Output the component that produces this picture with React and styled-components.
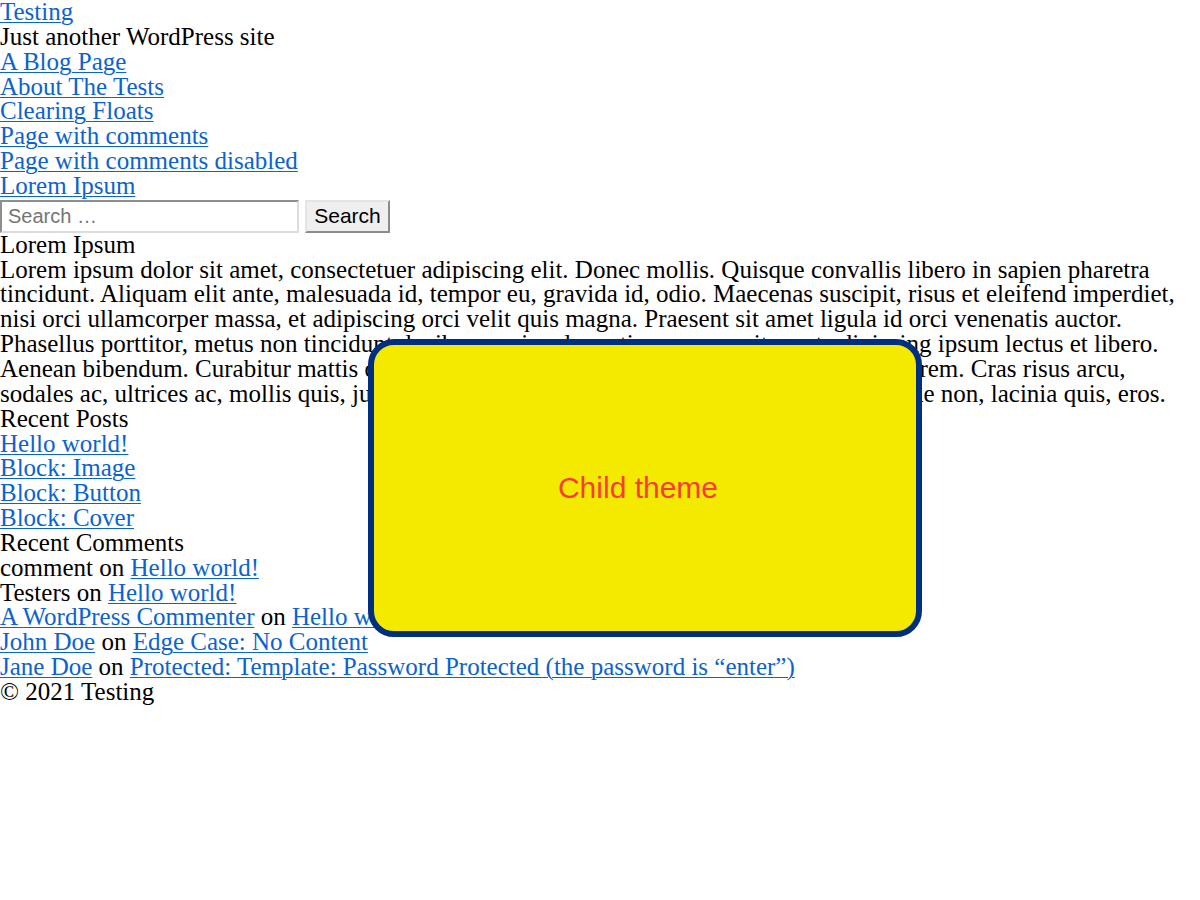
import React from "react";
import styled, { createGlobalStyle } from "styled-components";

const Global = createGlobalStyle`
  html, body { margin: 0; padding: 0; background: #fff; }
  body {
    font-family: "Liberation Serif", "Times New Roman", serif;
    font-size: 25px;
    line-height: 24.85px;
    color: #000;
  }
`;

const Page = styled.div`
  position: relative;
  width: 1200px;
  min-height: 900px;
`;

const Link = styled.a`
  color: #0b63cf;
  text-decoration: underline;
  text-decoration-thickness: 1px;
  text-underline-offset: 2px;
`;

const Line = styled.div`
  margin: 0;
  font-size: 25px;
  line-height: 24.85px;
  font-weight: normal;
`;

const List = styled.ul`
  list-style: none;
  margin: 0;
  padding: 0;
`;

const Item = styled.li`
  margin: 0;
  padding: 0;
`;

const SearchForm = styled.form`
  display: flex;
  align-items: flex-start;
  gap: 6px;
  height: 33px;
  margin: 1px 0 0;
`;

const SearchInput = styled.input`
  box-sizing: border-box;
  width: 299px;
  height: 33px;
  margin: 0;
  padding: 1px 6px 0;
  font-family: "Liberation Sans", Arial, sans-serif;
  font-size: 20px;
  color: #000;
  background: #fff;
  border-width: 2px;
  border-style: solid;
  border-color: #8e8e8e #dcdcdc #dcdcdc #8e8e8e;
  outline: none;
  &::placeholder { color: #757575; }
`;

const SearchButton = styled.button`
  box-sizing: border-box;
  width: 85px;
  height: 33px;
  margin: 0;
  padding: 0;
  font-family: "Liberation Sans", Arial, sans-serif;
  font-size: 21px;
  color: #000;
  background: #efefef;
  border-width: 2px;
  border-style: solid;
  border-color: #e4e4e4 #8c8c8c #8c8c8c #e4e4e4;
`;

const Paragraph = styled.p`
  margin: 0;
`;

const Overlay = styled.div`
  position: absolute;
  left: 368px;
  top: 339px;
  width: 554px;
  height: 298px;
  box-sizing: border-box;
  border: 6px solid #002f7f;
  border-radius: 26px;
  background: #f4ea00;
  display: flex;
  align-items: center;
  justify-content: center;
  padding-right: 14px;
`;

const OverlayText = styled.span`
  font-family: "Liberation Sans", Arial, sans-serif;
  font-size: 30px;
  line-height: 34px;
  color: #fb3b3b;
`;

const pages = [
  "A Blog Page",
  "About The Tests",
  "Clearing Floats",
  "Page with comments",
  "Page with comments disabled",
  "Lorem Ipsum",
];

const posts = ["Hello world!", "Block: Image", "Block: Button", "Block: Cover"];

export default function App() {
  return (
    <Page>
      <Global />
      <header>
        <Line><Link href="#">Testing</Link></Line>
        <Line>Just another WordPress site</Line>
        <nav>
          <List>
            {pages.map((p) => (
              <Item key={p}><Link href="#">{p}</Link></Item>
            ))}
          </List>
        </nav>
        <SearchForm onSubmit={(e) => e.preventDefault()}>
          <SearchInput type="search" placeholder="Search …" />
          <SearchButton type="submit">Search</SearchButton>
        </SearchForm>
      </header>
      <main>
        <Line as="h1">Lorem Ipsum</Line>
        <Paragraph>
          Lorem ipsum dolor sit amet, consectetuer adipiscing elit. Donec mollis. Quisque convallis libero in sapien pharetra tincidunt. Aliquam elit ante, malesuada id, tempor eu, gravida id, odio. Maecenas suscipit, risus et eleifend imperdiet, nisi orci ullamcorper massa, et adipiscing orci velit quis magna. Praesent sit amet ligula id orci venenatis auctor. Phasellus porttitor, metus non tincidunt dapibus, orci pede pretium neque, sit amet adipiscing ipsum lectus et libero. Aenean bibendum. Curabitur mattis quam id urna. Vivamus dui. Donec nonummy lacinia lorem. Cras risus arcu, sodales ac, ultrices ac, mollis quis, justo. Sed a libero. Quisque risus erat, posuere at, tristique non, lacinia quis, eros.
        </Paragraph>
      </main>
      <aside>
        <Line as="h2">Recent Posts</Line>
        <List>
          {posts.map((p) => (
            <Item key={p}><Link href="#">{p}</Link></Item>
          ))}
        </List>
        <Line as="h2">Recent Comments</Line>
        <List>
          <Item>comment on <Link href="#">Hello world!</Link></Item>
          <Item>Testers on <Link href="#">Hello world!</Link></Item>
          <Item><Link href="#">A WordPress Commenter</Link> on <Link href="#">Hello world!</Link></Item>
          <Item><Link href="#">John Doe</Link> on <Link href="#">Edge Case: No Content</Link></Item>
          <Item><Link href="#">Jane Doe</Link> on <Link href="#">Protected: Template: Password Protected (the password is “enter”)</Link></Item>
        </List>
      </aside>
      <footer>
        <Line>© 2021 Testing</Line>
      </footer>
      <Overlay>
        <OverlayText>Child theme</OverlayText>
      </Overlay>
    </Page>
  );
}
